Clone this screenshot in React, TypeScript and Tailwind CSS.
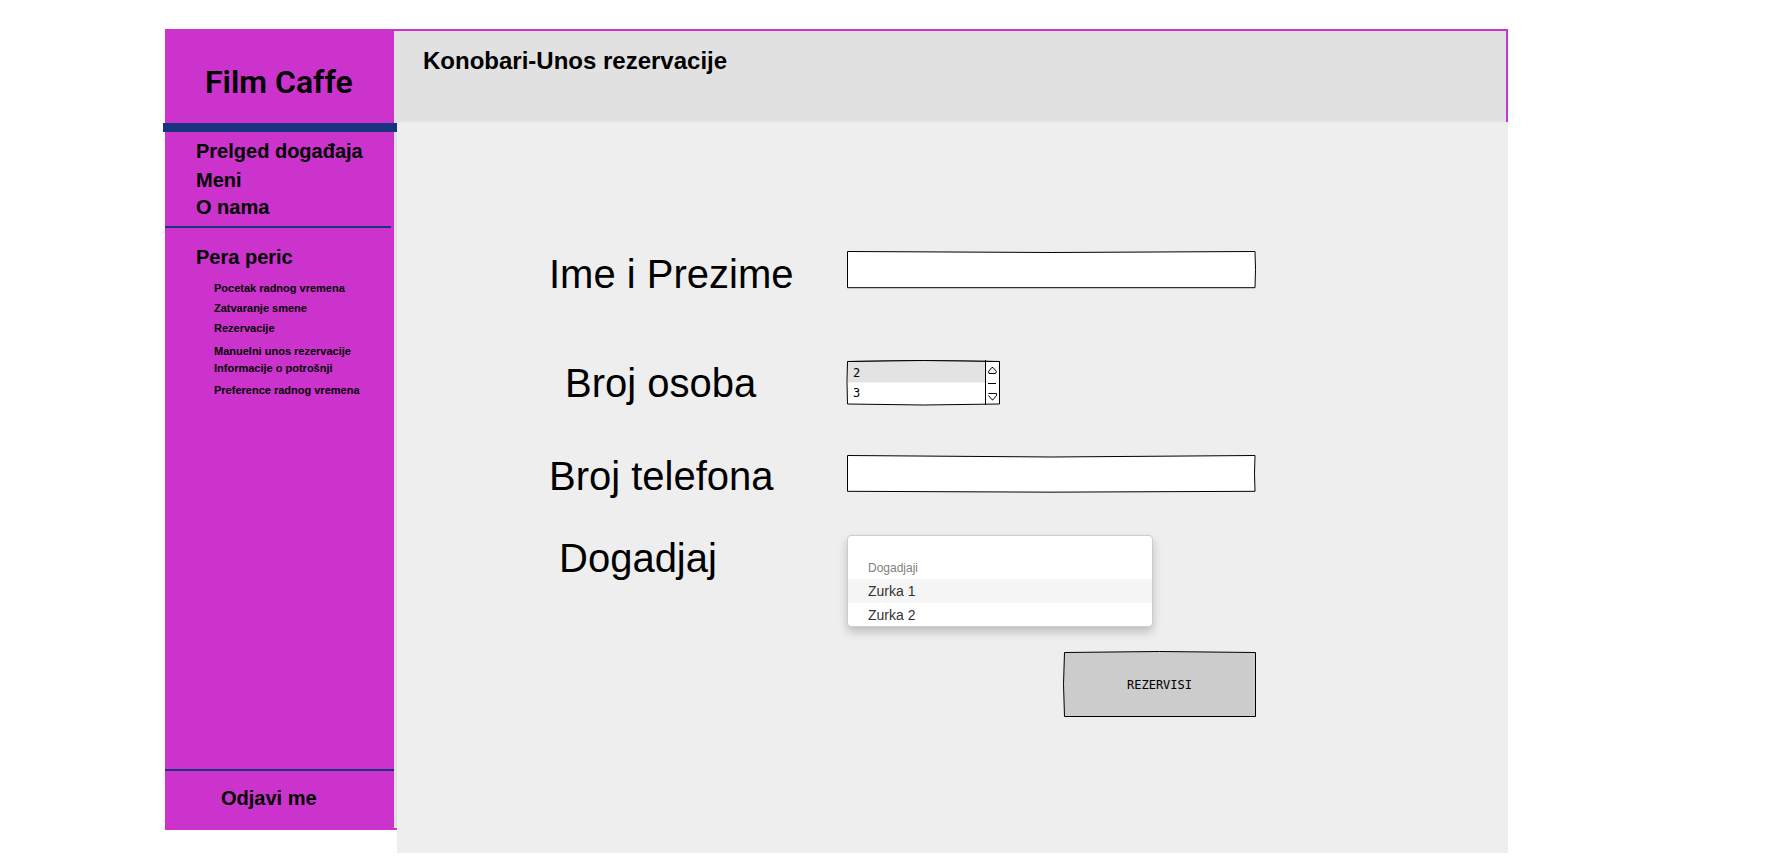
import type { ReactNode } from "react";

const mainLinks = [
  { label: "Prelged događaja", row: "h-[29px]" },
  { label: "Meni", row: "h-[27px]" },
  { label: "O nama", row: "h-[29px]" },
];

const staffLinks = [
  { label: "Pocetak radnog vremena", row: "h-5" },
  { label: "Zatvaranje smene", row: "h-5" },
  { label: "Rezervacije", row: "h-[23px]" },
  { label: "Manuelni unos rezervacije", row: "h-[17px]" },
  { label: "Informacije o potrošnji", row: "h-[22px]" },
  { label: "Preference radnog vremena", row: "h-5" },
];

/** Hand-drawn outline stretched over its parent. */
function Sketch({ box, d, fill, extra }: { box: string; d: string; fill: string; extra?: ReactNode }) {
  return (
    <svg
      aria-hidden="true"
      viewBox={box}
      preserveAspectRatio="none"
      className="pointer-events-none absolute inset-0 h-full w-full overflow-visible"
    >
      <path d={d} fill={fill} stroke="#000" strokeWidth="1" vectorEffect="non-scaling-stroke" />
      {extra}
    </svg>
  );
}

function Label({ htmlFor, indent, children }: { htmlFor: string; indent: string; children: ReactNode }) {
  return (
    <label htmlFor={htmlFor} className={`w-[300px] shrink-0 whitespace-nowrap text-[40px] leading-[46px] ${indent}`}>
      {children}
    </label>
  );
}

export default function App() {
  return (
    <div className="min-h-screen bg-white pb-1 pl-[165px] pr-[282px] pt-[29px] font-['Liberation_Sans',Arial,sans-serif] text-black">
      <div className="flex items-start">
        <aside className="w-[232px] shrink-0 border-y-2 border-[#cc33cc] bg-[#e1e1e1]">
          <div className="flex min-h-[797px] w-[229px] flex-col bg-[#cc33cc]">
            <div className="flex h-[92px] items-center pl-10 pt-2.5 font-[Roboto,sans-serif] text-[32px] font-semibold leading-[38px]">
              Film Caffe
            </div>
            <div className="-ml-0.5 h-[9px] w-[234px] bg-[#1a337f]" />
            <nav className="flex flex-col pl-[31px] pt-[7px]">
              {mainLinks.map((l) => (
                <a key={l.label} href="#" className={`${l.row} text-xl font-bold leading-6`}>
                  {l.label}
                </a>
              ))}
            </nav>
            <div className="mt-0.5 h-0.5 w-[226px] bg-[#1a337f]" />
            <nav className="flex flex-col pl-[31px] pt-[17px]">
              <a href="#" className="h-9 text-xl font-bold leading-6">
                Pera peric
              </a>
              <div className="flex flex-col pl-[18px]">
                {staffLinks.map((l) => (
                  <a key={l.label} href="#" className={`${l.row} text-[11px] font-bold leading-[14px]`}>
                    {l.label}
                  </a>
                ))}
              </div>
            </nav>
            <div className="mt-auto h-[59px] border-t-2 border-[#1a337f] pl-14 pt-[15px]">
              <a href="#" className="text-xl font-bold leading-6">
                Odjavi me
              </a>
            </div>
          </div>
        </aside>

        <div className="flex min-w-0 grow flex-col">
          <header className="h-[93px] border-r-2 border-t-2 border-[#cc33cc] bg-[#e1e1e1] pl-[26px] pt-4">
            <h1 className="text-2xl font-bold leading-7">Konobari-Unos rezervacije</h1>
          </header>
          <main className="min-h-[731px] bg-[#eeeeee] pl-[150px] pt-[129px]">
            <form className="w-[709px]" onSubmit={(e) => e.preventDefault()}>
              <div className="flex h-12 items-start">
                <Label htmlFor="ime" indent="pl-0.5">
                  Ime i Prezime
                </Label>
                <div className="relative h-[37px] grow">
                  <Sketch box="0 0 409 37" d="M.5 .5Q204 2.5 408 .5Q409 18 408 36.7L.5 36.7Z" fill="#fff" />
                  <input id="ime" type="text" className="relative h-full w-full bg-transparent px-2 text-base outline-none" />
                </div>
              </div>

              <div className="mt-[61px] flex h-12 items-start">
                <Label htmlFor="osoba" indent="pl-[18px]">
                  Broj osoba
                </Label>
                <div className="relative flex h-[45px] w-[153px]">
                  <Sketch
                    box="0 0 153 45"
                    d="M.5 1.5Q76 -.5 152.5 1.5V44Q76 46 .5 44Q-.5 22 .5 1.5Z"
                    fill="#fff"
                    extra={
                      <>
                        <path d="M1 2Q76 0 138 1.5V22.5H1Z" fill="#e3e3e3" />
                        <path d="M.5 1.5Q76 -.5 152.5 1.5" fill="none" stroke="#000" />
                      </>
                    }
                  />
                  <select
                    id="osoba"
                    size={2}
                    className="relative h-[45px] w-[138px] appearance-none overflow-hidden bg-transparent pt-1 font-['DejaVu_Sans_Mono',monospace] text-xs outline-none"
                  >
                    <option className="h-5 min-h-0 py-0.5 pl-1.5 leading-5 text-black">2</option>
                    <option className="h-5 min-h-0 py-0.5 pl-1.5 leading-5 text-black">3</option>
                  </select>
                  <div className="relative flex w-[15px] flex-col items-center justify-between border-l border-black py-1 pr-0.5">
                    <button type="button" aria-label="Manje" className="pt-0.5">
                      <svg width="9" height="8" viewBox="0 0 9 8" className="block">
                        <path d="M.5 5.5L3.8 1.5H5L8.5 5.5L7.5 7.5H1Z" fill="#eee" stroke="#000" />
                      </svg>
                    </button>
                    <span className="h-px w-2 bg-black" />
                    <button type="button" aria-label="Više">
                      <svg width="9" height="8" viewBox="0 0 9 8" className="block">
                        <path d="M.5 .5H8.5V2.5L5 6.8H4L.5 2.5" fill="#fff" stroke="#000" />
                      </svg>
                    </button>
                  </div>
                </div>
              </div>

              <div className="mt-[45px] flex h-12 items-start">
                <Label htmlFor="telefon" indent="pl-0.5">
                  Broj telefona
                </Label>
                <div className="relative mt-0.5 h-[37px] grow">
                  <Sketch box="0 0 409 37" d="M.5 .5Q204 3.5 408 .5Q407 18 408 36.3Q204 38 .5 36.3Z" fill="#fff" />
                  <input id="telefon" type="tel" className="relative h-full w-full bg-transparent px-2 text-base outline-none" />
                </div>
              </div>

              <div className="mt-[34px] flex items-start">
                <Label htmlFor="dogadjaj" indent="pl-3">
                  Dogadjaj
                </Label>
                <select
                  id="dogadjaj"
                  size={3}
                  className="h-[92px] w-[306px] appearance-none overflow-hidden rounded border border-[#cccccc] bg-white pt-5 text-sm shadow-[0_5px_10px_rgba(0,0,0,0.2)] outline-none"
                >
                  <option disabled className="h-[23px] min-h-0 pl-5 pt-[5px] text-xs leading-4 text-[#808080]">
                    Dogadjaji
                  </option>
                  <option className="h-6 min-h-0 bg-[#f5f5f5] pl-5 pt-1 text-[#333333]">Zurka 1</option>
                  <option className="h-6 min-h-0 pl-5 pt-1 text-[#333333]">Zurka 2</option>
                </select>
              </div>

              <div className="mt-6 flex justify-end">
                <button type="submit" className="relative h-[66px] w-[193px] pt-0.5 font-['DejaVu_Sans_Mono',monospace] text-xs">
                  <Sketch box="0 0 193 66" d="M1.5 1.5Q96 -.5 192.5 1.5V65.5H1.5Q-.5 33 1.5 1.5Z" fill="#ccc" />
                  <span className="relative">REZERVISI</span>
                </button>
              </div>
            </form>
          </main>
        </div>
      </div>
    </div>
  );
}
